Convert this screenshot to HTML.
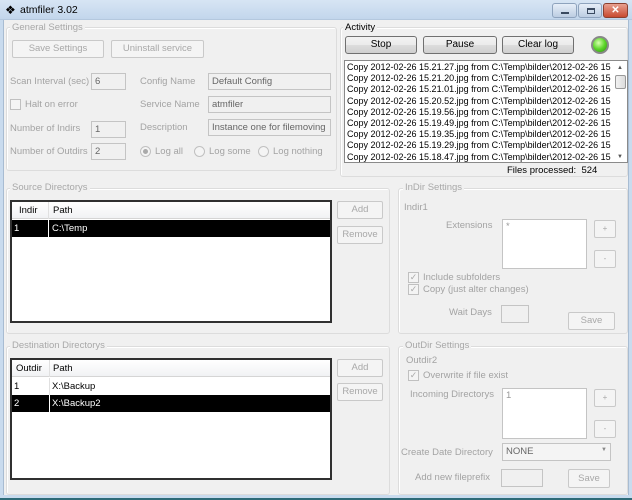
<!DOCTYPE html>
<html><head><meta charset="utf-8">
<style>
*{box-sizing:border-box;margin:0;padding:0}
body{width:632px;height:500px;overflow:hidden;background:#f0f0f0;font-family:"Liberation Sans",sans-serif;font-size:9.5px;color:#a3a3a3;position:relative}
.a{position:absolute;white-space:nowrap}
.title{left:0;top:0;width:632px;height:20px;background:linear-gradient(#d7e5f4,#c2d6ec);border-bottom:1px solid #b4c8de}
.frameL{left:0;top:20px;width:4px;height:480px;background:#c9dbee;border-right:1px solid #a8bcd2}
.frameR{right:0;top:20px;width:4px;height:480px;background:#c9dbee;border-left:1px solid #a8bcd2}
.frameB{left:0;top:495px;width:632px;height:5px;background:#c9dbee;border-bottom:2px solid #2e6b78}
.grp{position:absolute;border:1px solid #dcdcdc;border-radius:3px;box-shadow:inset 1px 1px 0 #fff}
.lbl{position:absolute;background:#f0f0f0;padding:0 2px;white-space:nowrap;color:#a8a8a8}
.btn{position:absolute;border:1px solid #c9c9c9;border-radius:2px;background:#f4f4f4;text-align:center;color:#a8a8a8}
.ebtn{position:absolute;border:1px solid #707070;border-radius:3px;background:linear-gradient(#f2f2f2,#ebebeb 50%,#dddddd 50%,#cfcfcf);text-align:center;color:#000;font-size:10px}
.inp{position:absolute;border:1px solid #c4c4c4;background:#f0f0f0;color:#666;padding:2px 3px;white-space:nowrap;overflow:hidden}
.box{position:absolute;border:1px solid #c4c4c4;background:#fff;color:#999;padding:1px 3px}
.list{position:absolute;border:2px solid #303030;background:#fff;color:#000}
.hdr{position:absolute;left:0;right:0;top:0;height:17px;background:linear-gradient(#fff,#f1f2f4);border-bottom:1px solid #d5d5d5}
.row{position:absolute;left:0;right:0;height:17px;color:#000}
.sel{background:#000;color:#fff}
.cb{position:absolute;width:11px;height:11px;border:1px solid #c0c0c0;background:#f4f4f4;font-size:9px;line-height:9px;text-align:center;color:#aaa}
.rd{position:absolute;width:11px;height:11px;border:1px solid #c0c0c0;border-radius:50%;background:#f4f4f4}
</style></head><body>
<div class="a title"></div>
<div class="a" style="left:5px;top:3px;font-size:12px;color:#000">&#10070;</div>
<div class="a" style="left:20px;top:4px;font-size:10.5px;color:#000">atmfiler 3.02</div>
<div class="a" style="left:552px;top:3px;width:25px;height:15px;border:1px solid #8ea3bd;border-radius:3px;background:linear-gradient(#e6eef8,#bccde2)"><div style="position:absolute;left:8px;top:8px;width:8px;height:2px;background:#3a4a60"></div></div>
<div class="a" style="left:578px;top:3px;width:24px;height:15px;border:1px solid #8ea3bd;border-radius:3px;background:linear-gradient(#e6eef8,#bccde2)"><div style="position:absolute;left:8px;top:4px;width:8px;height:6px;border:1px solid #3a4a60;border-top-width:2px"></div></div>
<div class="a" style="left:603px;top:3px;width:25px;height:15px;border:1px solid #8a4030;border-radius:3px;background:linear-gradient(#e8a090,#c84a30);color:#fff;font-size:10px;font-weight:bold;text-align:center;line-height:13px">✕</div>
<div class="a frameL"></div><div class="a frameR"></div><div class="a frameB"></div>

<!-- General Settings -->
<div class="grp" style="left:6px;top:27px;width:331px;height:144px"></div>
<div class="lbl" style="left:10px;top:22px">General Settings</div>
<div class="btn" style="left:12px;top:40px;width:92px;height:18px;line-height:16px">Save Settings</div>
<div class="btn" style="left:111px;top:40px;width:93px;height:18px;line-height:16px">Uninstall service</div>
<div class="a" style="left:10px;top:76px">Scan Interval (sec)</div>
<div class="inp" style="left:91px;top:73px;width:35px;height:17px">6</div>
<div class="a" style="left:140px;top:76px">Config Name</div>
<div class="inp" style="left:208px;top:73px;width:123px;height:17px">Default Config</div>
<div class="cb" style="left:10px;top:99px"></div>
<div class="a" style="left:25px;top:99px">Halt on error</div>
<div class="a" style="left:140px;top:99px">Service Name</div>
<div class="inp" style="left:208px;top:96px;width:123px;height:17px">atmfiler</div>
<div class="a" style="left:10px;top:123px">Number of Indirs</div>
<div class="inp" style="left:91px;top:121px;width:35px;height:17px">1</div>
<div class="a" style="left:140px;top:122px">Description</div>
<div class="inp" style="left:208px;top:119px;width:123px;height:17px">Instance one for filemoving</div>
<div class="a" style="left:10px;top:146px">Number of Outdirs</div>
<div class="inp" style="left:91px;top:143px;width:35px;height:17px">2</div>
<div class="rd" style="left:140px;top:146px"><div style="position:absolute;left:2px;top:2px;width:5px;height:5px;border-radius:50%;background:#aaa"></div></div>
<div class="a" style="left:155px;top:146px">Log all</div>
<div class="rd" style="left:194px;top:146px"></div>
<div class="a" style="left:209px;top:146px">Log some</div>
<div class="rd" style="left:258px;top:146px"></div>
<div class="a" style="left:273px;top:146px">Log nothing</div>

<!-- Activity -->
<div class="grp" style="left:340px;top:27px;width:288px;height:150px"></div>
<div class="lbl" style="left:343px;top:22px;color:#000">Activity</div>
<div class="ebtn" style="left:345px;top:36px;width:72px;height:18px;line-height:16px">Stop</div>
<div class="ebtn" style="left:423px;top:36px;width:74px;height:18px;line-height:16px">Pause</div>
<div class="ebtn" style="left:502px;top:36px;width:72px;height:18px;line-height:16px">Clear log</div>
<div class="a" style="left:591px;top:36px;width:18px;height:18px;border-radius:50%;background:#888;padding:2px"><div style="width:14px;height:14px;border-radius:50%;background:radial-gradient(circle at 40% 35%,#d8ffb0,#5cd62a 50%,#2d8a10)"></div></div>
<div class="a" style="left:344px;top:60px;width:284px;height:103px;border:1px solid #8a8a8a;background:#fff;overflow:hidden;color:#000;font-size:9px;line-height:11.2px;padding:1px 2px">
Copy 2012-02-26 15.21.27.jpg from C:\Temp\bilder\2012-02-26 15<br>Copy 2012-02-26 15.21.20.jpg from C:\Temp\bilder\2012-02-26 15<br>Copy 2012-02-26 15.21.01.jpg from C:\Temp\bilder\2012-02-26 15<br>Copy 2012-02-26 15.20.52.jpg from C:\Temp\bilder\2012-02-26 15<br>Copy 2012-02-26 15.19.56.jpg from C:\Temp\bilder\2012-02-26 15<br>Copy 2012-02-26 15.19.49.jpg from C:\Temp\bilder\2012-02-26 15<br>Copy 2012-02-26 15.19.35.jpg from C:\Temp\bilder\2012-02-26 15<br>Copy 2012-02-26 15.19.29.jpg from C:\Temp\bilder\2012-02-26 15<br>Copy 2012-02-26 15.18.47.jpg from C:\Temp\bilder\2012-02-26 15
<div style="position:absolute;right:0;top:0;width:13px;height:101px;background:#fff"><div style="position:absolute;left:3px;top:2px;font-size:6px;color:#555">▲</div><div style="position:absolute;left:1px;top:14px;width:11px;height:14px;border:1px solid #999;border-radius:2px;background:linear-gradient(90deg,#f2f2f2,#dcdcdc)"></div><div style="position:absolute;left:3px;top:91px;font-size:6px;color:#555">▼</div></div>
</div>
<div class="a" style="left:507px;top:165px;color:#000">Files processed:&nbsp; 524</div>

<!-- Source Directorys -->
<div class="grp" style="left:6px;top:188px;width:384px;height:146px"></div>
<div class="lbl" style="left:10px;top:182px">Source Directorys</div>
<div class="list" style="left:10px;top:200px;width:322px;height:123px">
<div class="hdr"><span class="a" style="left:7px;top:3px">Indir</span><span class="a" style="left:36px;top:0;height:17px;border-left:1px solid #e0e0e0"></span><span class="a" style="left:41px;top:3px">Path</span></div>
<div class="row sel" style="top:18px"><span class="a" style="left:2px;top:3px">1</span><span class="a" style="left:36px;top:0;height:17px;border-left:1px solid #fff"></span><span class="a" style="left:40px;top:3px">C:\Temp</span></div>
</div>
<div class="btn" style="left:337px;top:201px;width:46px;height:18px;line-height:16px">Add</div>
<div class="btn" style="left:337px;top:226px;width:46px;height:18px;line-height:16px">Remove</div>

<!-- InDir Settings -->
<div class="grp" style="left:398px;top:188px;width:230px;height:146px"></div>
<div class="lbl" style="left:403px;top:182px">InDir Settings</div>
<div class="a" style="left:404px;top:202px">Indir1</div>
<div class="a" style="left:446px;top:220px">Extensions</div>
<div class="box" style="left:502px;top:219px;width:85px;height:50px">*</div>
<div class="btn" style="left:594px;top:220px;width:22px;height:18px;line-height:16px;font-size:8px">+</div>
<div class="btn" style="left:594px;top:250px;width:22px;height:18px;line-height:16px;font-size:8px">-</div>
<div class="cb" style="left:408px;top:272px">✓</div>
<div class="a" style="left:423px;top:272px">Include subfolders</div>
<div class="cb" style="left:408px;top:284px">✓</div>
<div class="a" style="left:423px;top:284px">Copy (just alter changes)</div>
<div class="a" style="left:449px;top:307px">Wait Days</div>
<div class="inp" style="left:501px;top:305px;width:28px;height:18px"></div>
<div class="btn" style="left:568px;top:312px;width:47px;height:18px;line-height:16px">Save</div>

<!-- Destination -->
<div class="grp" style="left:6px;top:346px;width:384px;height:149px"></div>
<div class="lbl" style="left:10px;top:340px">Destination Directorys</div>
<div class="list" style="left:10px;top:358px;width:322px;height:122px">
<div class="hdr"><span class="a" style="left:4px;top:3px">Outdir</span><span class="a" style="left:37px;top:0;height:17px;border-left:1px solid #e0e0e0"></span><span class="a" style="left:41px;top:3px">Path</span></div>
<div class="row" style="top:18px"><span class="a" style="left:2px;top:3px">1</span><span class="a" style="left:37px;top:0;height:17px;border-left:1px solid #e0e0e0"></span><span class="a" style="left:40px;top:3px">X:\Backup</span></div>
<div class="row sel" style="top:35px"><span class="a" style="left:2px;top:3px">2</span><span class="a" style="left:37px;top:0;height:17px;border-left:1px solid #fff"></span><span class="a" style="left:40px;top:3px">X:\Backup2</span></div>
</div>
<div class="btn" style="left:337px;top:359px;width:46px;height:18px;line-height:16px">Add</div>
<div class="btn" style="left:337px;top:383px;width:46px;height:18px;line-height:16px">Remove</div>

<!-- OutDir Settings -->
<div class="grp" style="left:398px;top:346px;width:230px;height:149px"></div>
<div class="lbl" style="left:403px;top:340px">OutDir Settings</div>
<div class="a" style="left:406px;top:355px">Outdir2</div>
<div class="cb" style="left:408px;top:370px">✓</div>
<div class="a" style="left:423px;top:370px">Overwrite if file exist</div>
<div class="a" style="left:410px;top:389px">Incoming Directorys</div>
<div class="box" style="left:502px;top:388px;width:85px;height:51px">1</div>
<div class="btn" style="left:594px;top:389px;width:22px;height:18px;line-height:16px;font-size:8px">+</div>
<div class="btn" style="left:594px;top:420px;width:22px;height:18px;line-height:16px;font-size:8px">-</div>
<div class="a" style="left:401px;top:447px">Create Date Directory</div>
<div class="inp" style="left:502px;top:443px;width:109px;height:18px;background:#f4f4f4">NONE<span class="a" style="right:3px;top:3px;font-size:6px;color:#888">▼</span></div>
<div class="a" style="left:415px;top:472px">Add new fileprefix</div>
<div class="inp" style="left:501px;top:469px;width:42px;height:18px"></div>
<div class="btn" style="left:568px;top:469px;width:42px;height:19px;line-height:17px">Save</div>
</body></html>
